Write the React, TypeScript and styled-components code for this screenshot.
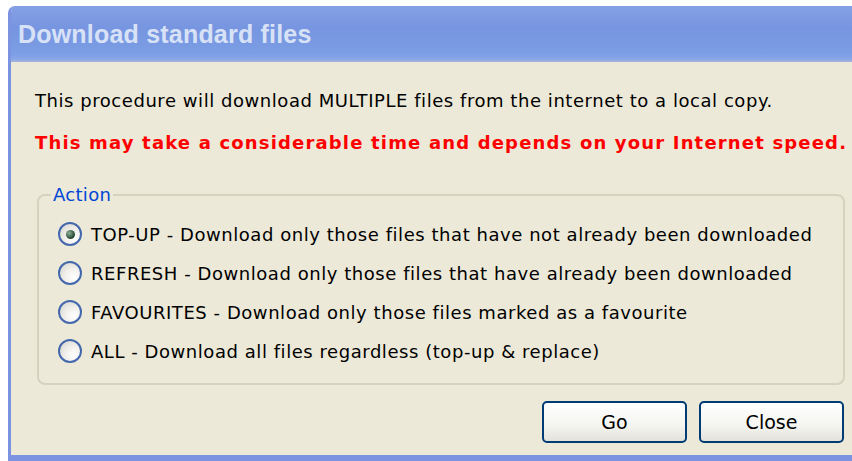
import styled, { createGlobalStyle } from "styled-components";

const GlobalStyle = createGlobalStyle`
  html, body {
    margin: 0;
    padding: 0;
    background: #fff;
  }
  body {
    font-family: "DejaVu Sans", Verdana, sans-serif;
  }
`;

const Window = styled.div`
  margin: 6px 0 0 8px;
  width: 844px;
  height: 455px;
  display: flex;
  flex-direction: column;
  background: #ece9d8;
  border-left: 3px solid #7b93e0;
  border-bottom: 6px solid #7b93e0;
  border-top-left-radius: 7px;
  box-sizing: border-box;
  overflow: hidden;
`;

const TitleBar = styled.div`
  height: 56px;
  flex: none;
  display: flex;
  align-items: center;
  padding-left: 7px;
  background: linear-gradient(
    180deg,
    #84a0e6 0%,
    #7795e0 40%,
    #7b9ee4 85%,
    #8aa6e8 95%,
    #a7b4d8 100%
  );
  color: #d8e2f7;
  font-family: "Liberation Sans", Arial, sans-serif;
  font-weight: 700;
  font-size: 25px;
  letter-spacing: 0.2px;
`;

const Body = styled.div`
  flex: 1;
  display: flex;
  flex-direction: column;
  padding: 27px 8px 0 24px;
  font-size: 18px;
  letter-spacing: 0.55px;
  color: #000;
`;

const Note = styled.div<{ $warn?: boolean }>`
  height: 42px;
  line-height: 24px;
  color: ${(p) => (p.$warn ? "#ff0000" : "#000")};
  font-weight: ${(p) => (p.$warn ? 700 : 400)};
  letter-spacing: ${(p) => (p.$warn ? "1.17px" : "0.55px")};
  white-space: nowrap;
`;

const Group = styled.fieldset`
  margin: 12px 0 0 2px;
  width: 808px;
  box-sizing: border-box;
  border: 2px solid #d5d2c0;
  border-radius: 8px;
  padding: 17px 0 20px 19px;
  display: flex;
  flex-direction: column;
  gap: 15px;
`;

const Legend = styled.legend`
  color: #0046d5;
  padding: 0 2px;
  margin-left: -7px;
  font-size: 18px;
  line-height: 20px;
  letter-spacing: 0.3px;
`;

const Option = styled.label`
  display: flex;
  align-items: center;
  gap: 9px;
  height: 24px;
  white-space: nowrap;
`;

const Radio = styled.span<{ $checked?: boolean }>`
  width: 24px;
  height: 24px;
  flex: none;
  box-sizing: border-box;
  border-radius: 50%;
  border: 2px solid #4468ad;
  background: radial-gradient(circle at 70% 70%, #ffffff 0%, #f0efea 45%, #d4d2c8 100%);
  display: flex;
  align-items: center;
  justify-content: center;

  &::after {
    content: "";
    width: 9px;
    height: 9px;
    border-radius: 50%;
    background: radial-gradient(circle at 35% 35%, #8fb29b 0%, #21402b 70%);
    display: ${(p) => (p.$checked ? "block" : "none")};
  }
`;

const Footer = styled.div`
  display: flex;
  justify-content: flex-end;
  gap: 12px;
  margin-top: 16px;
`;

const Button = styled.button`
  box-sizing: border-box;
  width: 145px;
  height: 42px;
  border: 2px solid #003c74;
  border-radius: 5px;
  background: linear-gradient(180deg, #ffffff 0%, #f4f4f0 60%, #e3e2da 100%);
  font-family: "DejaVu Sans", Verdana, sans-serif;
  font-size: 19px;
  color: #000;
  padding: 0;
`;

const options = [
  { label: "TOP-UP - Download only those files that have not already been downloaded", checked: true },
  { label: "REFRESH - Download only those files that have already been downloaded" },
  { label: "FAVOURITES - Download only those files marked as a favourite" },
  { label: "ALL - Download all files regardless (top-up & replace)" },
];

export default function App() {
  return (
    <>
      <GlobalStyle />
      <Window>
        <TitleBar>Download standard files</TitleBar>
        <Body>
          <Note>This procedure will download MULTIPLE files from the internet to a local copy.</Note>
          <Note $warn>This may take a considerable time and depends on your Internet speed.</Note>
          <Group>
            <Legend>Action</Legend>
            {options.map((o) => (
              <Option key={o.label}>
                <Radio $checked={o.checked} />
                {o.label}
              </Option>
            ))}
          </Group>
          <Footer>
            <Button>Go</Button>
            <Button>Close</Button>
          </Footer>
        </Body>
      </Window>
    </>
  );
}
